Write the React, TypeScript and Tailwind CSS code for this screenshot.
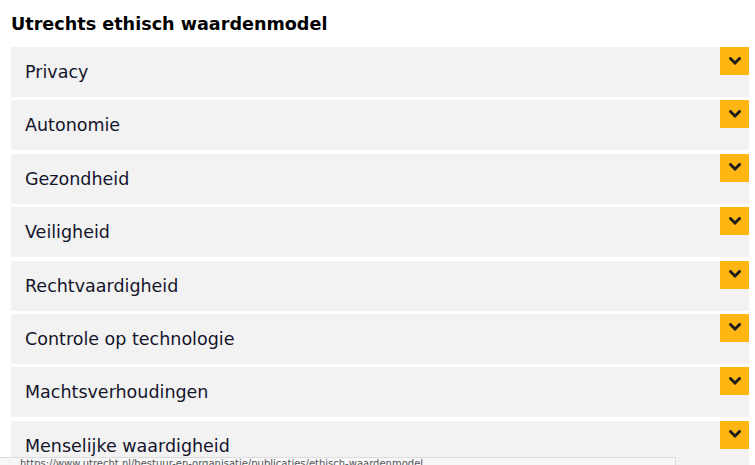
const items = [
  'Privacy',
  'Autonomie',
  'Gezondheid',
  'Veiligheid',
  'Rechtvaardigheid',
  'Controle op technologie',
  'Machtsverhoudingen',
  'Menselijke waardigheid',
]

function Chevron() {
  return (
    <svg width="12" height="9" viewBox="0 0 12 9" fill="none" aria-hidden="true">
      <path d="M1.5 1.5 6 6 10.5 1.5" stroke="#1c1c1c" strokeWidth="2.8" strokeLinecap="square" />
    </svg>
  )
}

export default function App() {
  return (
    <div className="relative h-[465px] w-[755px] overflow-hidden bg-white font-['DejaVu_Sans',sans-serif]">
      <h1 className="pl-[11px] pt-[11px] text-[17.6px] font-bold leading-[26px] text-black">Utrechts ethisch waardenmodel</h1>
      <div className="mt-[10px] ml-[11px] flex w-[738px] flex-col gap-[3.4px]">
        {items.map((item) => (
          <button key={item} className="flex h-[50px] items-start justify-between bg-[#f2f2f2] text-left">
            <span className="pl-[14px] pt-[13px] text-[17.5px] leading-[24px] text-[#14142b]">{item}</span>
            <span className="flex h-[28px] w-[29px] items-center justify-center bg-[#ffb612]">
              <Chevron />
            </span>
          </button>
        ))}
      </div>
      <div className="absolute bottom-0 left-0 h-[8px] w-[676px] overflow-hidden border-t border-r border-[#dcdcdc] bg-[#f7f7f7] pl-[20px] text-[10px] leading-[12px] text-[#555]">
        https://www.utrecht.nl/bestuur-en-organisatie/publicaties/ethisch-waardenmodel
      </div>
    </div>
  )
}
